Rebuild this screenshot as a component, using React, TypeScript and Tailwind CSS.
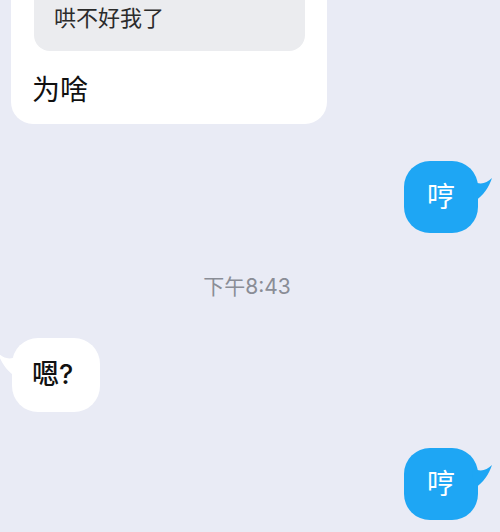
import React from "react"

const font = { fontFamily: "Inter, 'Noto Sans CJK SC', sans-serif" }

function BlueTail() {
  return (
    <svg
      className="absolute left-[calc(100%-6px)] top-[14px]"
      width="22"
      height="30"
      viewBox="0 0 22 30"
    >
      <path d="M0 6 C8 10 14 9 20 3 C17 12 12 20 2 27 Z" fill="#1ea6f4" />
    </svg>
  )
}

function WhiteTail() {
  return (
    <svg
      className="absolute right-[calc(100%-6px)] top-[12px] -scale-x-100"
      width="22"
      height="30"
      viewBox="0 0 22 30"
    >
      <path d="M0 6 C8 10 14 9 20 3 C17 12 12 20 2 27 Z" fill="#ffffff" />
    </svg>
  )
}

function MyBubble({ text, mt }: { text: string; mt: string }) {
  return (
    <div className={`flex justify-end pr-[22px] ${mt}`}>
      <div className="relative flex h-[72px] w-[74px] items-center justify-center rounded-[26px] bg-[#1ea6f4] text-[28px] text-white">
        {text}
        <BlueTail />
      </div>
    </div>
  )
}

export default function App() {
  return (
    <div className="h-[532px] w-[500px] overflow-hidden bg-[#e9ebf5]" style={font}>
      <div className="-mt-[30px] ml-[11px] w-[316px] rounded-[22px] bg-white pb-[16px] pl-[21px] pt-[12px]">
        <div className="ml-[2px] flex h-[69px] w-[271px] items-end rounded-[16px] bg-[#ebecef] pb-[20px] pl-[20px] text-[22px] leading-[26px] text-[#2b2b2b]">
          哄不好我了
        </div>
        <div className="mt-[21px] text-[28px] leading-[36px] text-[#111]">为啥</div>
      </div>

      <MyBubble text="哼" mt="mt-[37px]" />

      <div className="mt-[41px] pr-[6px] text-center text-[21px] leading-[26px] text-[#8a8d96]">
        下午8:43
      </div>

      <div className="mt-[38px] pl-[12px]">
        <div className="relative flex h-[74px] w-[88px] items-center rounded-[26px] bg-white pl-[20px] text-[27px] font-medium text-[#111]">
          嗯?
          <WhiteTail />
        </div>
      </div>

      <MyBubble text="哼" mt="mt-[36px]" />
    </div>
  )
}
